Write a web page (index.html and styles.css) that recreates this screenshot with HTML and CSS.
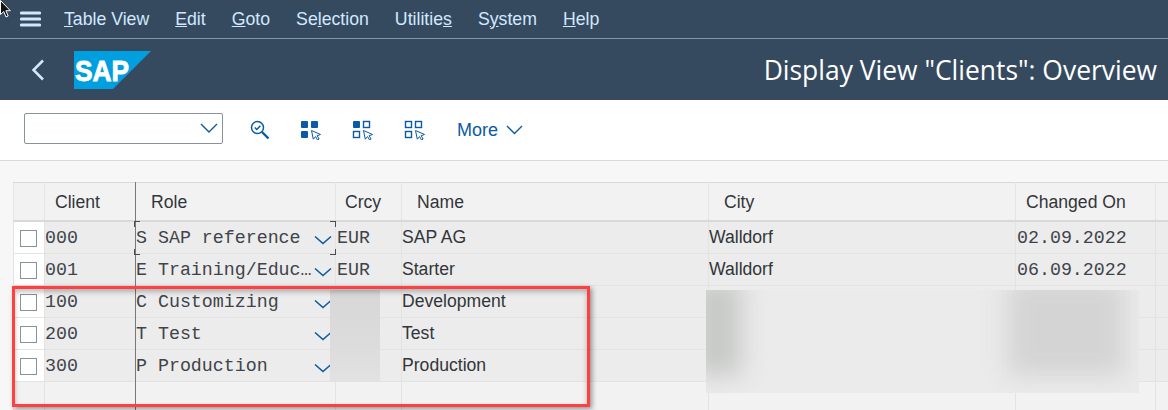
FILE: index.html
```html
<!DOCTYPE html>
<html lang="en">
<head>
  <meta charset="UTF-8" />
  <title>Display View "Clients": Overview</title>
  <link rel="stylesheet" href="styles.css">
</head>
<body>
  <svg class="mouse" width="11" height="19" viewBox="0 0 11 19">
    <path d="M0.5 0.5v14l3.2-3 2.3 5.5 2.2-1-2.3-5.3h4.4z" fill="#111" stroke="#fff"/>
  </svg>

  <header class="shell">
    <nav class="menu">
      <svg class="burger" width="21" height="16" viewBox="0 0 21 16"><path d="M1.5 2h18M1.5 8h18M1.5 14h18" stroke="#d1e8ff" stroke-width="3.2" stroke-linecap="round"/></svg>
      <a><u>T</u>able View</a>
      <a><u>E</u>dit</a>
      <a><u>G</u>oto</a>
      <a>Se<u>l</u>ection</a>
      <a>Utilitie<u>s</u></a>
      <a>S<u>y</u>stem</a>
      <a><u>H</u>elp</a>
    </nav>
    <div class="titlebar">
      <svg class="back" width="14" height="22" viewBox="0 0 14 22"><path d="M12 1.5 2.5 11l9.5 9.5" fill="none" stroke="#d1e8ff" stroke-width="2.5"/></svg>
      <svg class="logo" width="77" height="38" viewBox="0 0 77 38">
        <polygon points="0,0 77,0 39,38 0,38" fill="#009fdf"/>
        <text x="1" y="30" textLength="54" lengthAdjust="spacingAndGlyphs" class="logo-text">SAP</text>
      </svg>
      <h1>Display View "Clients": Overview</h1>
    </div>
  </header>

  <div class="toolbar">
    <div class="combo">
      <svg width="18" height="10" viewBox="0 0 18 10"><path d="M1 1l8 8 8-8" fill="none" stroke="#0a5aa5" stroke-width="1.4"/></svg>
    </div>
    <button class="tool tool-search">
      <svg width="20" height="20" viewBox="0 0 20 20">
        <circle cx="7.5" cy="7.5" r="6" fill="none" stroke="#0a5aa5" stroke-width="1.5"/>
        <path d="M12 12l6.5 6.5" stroke="#0a5aa5" stroke-width="2.4"/>
        <path d="M4.8 7.5l2 2 3.6-3.8" fill="none" stroke="#0a5aa5" stroke-width="1.5"/>
      </svg>
    </button>
    <button class="tool">
      <svg width="22" height="20" viewBox="0 0 22 20">
        <rect x="1" y="1" width="7" height="7" rx="1" fill="#0a5aa5"/>
        <rect x="11" y="1" width="7" height="7" rx="1" fill="#0a5aa5"/>
        <rect x="1" y="11" width="7" height="7" rx="1" fill="#0a5aa5"/>
        <path d="M11.5 10.5l9 4-3.4 1.2 2 3.3-1.6.9-2-3.3-2.2 2.6z" fill="#fff" stroke="#0a5aa5"/>
      </svg>
    </button>
    <button class="tool">
      <svg width="22" height="20" viewBox="0 0 22 20">
        <rect x="1" y="1" width="7" height="7" rx="1" fill="#0a5aa5"/>
        <rect x="11.5" y="1.5" width="6" height="6" fill="none" stroke="#0a5aa5" stroke-width="1.4"/>
        <rect x="1.5" y="11.5" width="6" height="6" fill="none" stroke="#0a5aa5" stroke-width="1.4"/>
        <path d="M11.5 10.5l9 4-3.4 1.2 2 3.3-1.6.9-2-3.3-2.2 2.6z" fill="#fff" stroke="#0a5aa5"/>
      </svg>
    </button>
    <button class="tool">
      <svg width="22" height="20" viewBox="0 0 22 20">
        <rect x="1.5" y="1.5" width="6" height="6" fill="none" stroke="#0a5aa5" stroke-width="1.4"/>
        <rect x="11.5" y="1.5" width="6" height="6" fill="none" stroke="#0a5aa5" stroke-width="1.4"/>
        <rect x="1.5" y="11.5" width="6" height="6" fill="none" stroke="#0a5aa5" stroke-width="1.4"/>
        <path d="M11.5 10.5l9 4-3.4 1.2 2 3.3-1.6.9-2-3.3-2.2 2.6z" fill="#fff" stroke="#0a5aa5"/>
      </svg>
    </button>
    <button class="more">More
      <svg width="17" height="10" viewBox="0 0 17 10"><path d="M1 1l7.5 7.5L16 1" fill="none" stroke="#0a5aa5" stroke-width="1.4"/></svg>
    </button>
  </div>

  <main class="content">
    <table class="grid">
      <colgroup>
        <col class="c-check"><col class="c-client"><col class="c-role"><col class="c-crcy"><col class="c-name"><col class="c-city"><col class="c-date"><col class="c-rest">
      </colgroup>
      <thead>
        <tr>
          <th></th>
          <th class="h-client">Client</th>
          <th class="h-role">Role</th>
          <th class="h-crcy">Crcy</th>
          <th class="h-name">Name</th>
          <th class="h-city">City</th>
          <th class="h-date">Changed On</th>
          <th></th>
        </tr>
      </thead>
      <tbody>
        <tr>
          <td class="check"><span class="box"></span></td>
          <td class="mono flush">000</td>
          <td class="flush"><div class="role"><span class="mono">S SAP reference</span><svg width="18" height="10" viewBox="0 0 18 10"><path d="M1 1.5l8 7 8-7" fill="none" stroke="#0a5aa5" stroke-width="1.6"/></svg></div></td>
          <td class="mono">EUR</td>
          <td class="txt flush">SAP AG</td>
          <td class="txt flush">Walldorf</td>
          <td class="mono date">02.09.2022</td>
          <td></td>
        </tr>
        <tr>
          <td class="check"><span class="box"></span></td>
          <td class="mono flush">001</td>
          <td class="flush"><div class="role"><span class="mono">E Training/Educ…</span><svg width="18" height="10" viewBox="0 0 18 10"><path d="M1 1.5l8 7 8-7" fill="none" stroke="#0a5aa5" stroke-width="1.6"/></svg></div></td>
          <td class="mono">EUR</td>
          <td class="txt flush">Starter</td>
          <td class="txt flush">Walldorf</td>
          <td class="mono date">06.09.2022</td>
          <td></td>
        </tr>
        <tr>
          <td class="check"><span class="box"></span></td>
          <td class="mono flush">100</td>
          <td class="flush"><div class="role"><span class="mono">C Customizing</span><svg width="18" height="10" viewBox="0 0 18 10"><path d="M1 1.5l8 7 8-7" fill="none" stroke="#0a5aa5" stroke-width="1.6"/></svg></div></td>
          <td></td>
          <td class="txt flush">Development</td>
          <td></td>
          <td></td>
          <td></td>
        </tr>
        <tr>
          <td class="check"><span class="box"></span></td>
          <td class="mono flush">200</td>
          <td class="flush"><div class="role"><span class="mono">T Test</span><svg width="18" height="10" viewBox="0 0 18 10"><path d="M1 1.5l8 7 8-7" fill="none" stroke="#0a5aa5" stroke-width="1.6"/></svg></div></td>
          <td></td>
          <td class="txt flush">Test</td>
          <td></td>
          <td></td>
          <td></td>
        </tr>
        <tr>
          <td class="check"><span class="box"></span></td>
          <td class="mono flush">300</td>
          <td class="flush"><div class="role"><span class="mono">P Production</span><svg width="18" height="10" viewBox="0 0 18 10"><path d="M1 1.5l8 7 8-7" fill="none" stroke="#0a5aa5" stroke-width="1.6"/></svg></div></td>
          <td></td>
          <td class="txt flush">Production</td>
          <td></td>
          <td></td>
          <td></td>
        </tr>
        <tr class="empty">
          <td></td><td></td><td></td><td></td><td></td><td></td><td></td><td></td>
        </tr>
      </tbody>
    </table>

    <div class="col-marker"></div>
    <div class="focus"></div>
    <div class="blur blur-crcy"></div>
    <div class="blur blur-wide"><span class="smear smear-l"></span><span class="smear smear-r"></span></div>
    <div class="highlight"></div>
  </main>
</body>
</html>
```

FILE: styles.css
```css
html, body {
  margin: 0;
  padding: 0;
  height: 410px;
  overflow: hidden;
}
body {
  position: relative;
  background: #f7f7f7;
  font-family: "Liberation Sans", Arial, sans-serif;
  color: #32363a;
}
.mouse {
  position: absolute;
  top: 0;
  left: 0;
  z-index: 5;
}

/* shell header */
.shell {
  background: #354a5f;
  height: 100px;
}
.menu {
  display: flex;
  align-items: center;
  height: 38px;
  border-bottom: 1px solid #7996b4;
  color: #d1e8ff;
  font-size: 17.7px;
  gap: 26px;
  padding-left: 20px;
}
.menu .burger {
  margin-right: -3px;
}
.titlebar {
  display: flex;
  align-items: center;
  height: 61px;
  padding: 0 11px 0 31px;
}
.back {
  margin-right: 29px;
}
.logo-text {
  fill: #fff;
  stroke: #fff;
  stroke-width: 0.9px;
  font-family: "Liberation Sans", Arial, sans-serif;
  font-weight: 700;
  font-size: 30px;
}
.titlebar h1 {
  margin: 0 0 0 auto;
  font-family: "Open Sans", sans-serif;
  font-weight: 400;
  font-size: 26.45px;
  color: #fff;
}

/* toolbar */
.toolbar {
  display: flex;
  align-items: center;
  height: 60px;
  background: #fff;
  border-bottom: 1px solid #d9d9d9;
  padding-left: 24px;
}
.combo {
  display: flex;
  align-items: center;
  justify-content: flex-end;
  box-sizing: border-box;
  width: 199px;
  height: 31px;
  border: 1px solid #89919a;
  border-radius: 2px;
  padding-right: 4px;
  margin: 0 27px 4px 0;
}
.tool {
  display: flex;
  width: 22px;
  padding: 0;
  margin-right: 30px;
  border: none;
  background: none;
}
.tool-search {
  margin-right: 28px;
}
.more {
  display: flex;
  align-items: center;
  gap: 8px;
  margin-left: 1px;
  padding: 0;
  border: none;
  background: none;
  font-family: "Liberation Sans", Arial, sans-serif;
  font-size: 18px;
  color: #0a5aa5;
}

/* table */
.content {
  position: relative;
  padding: 21px 0 0 13px;
}
.grid {
  table-layout: fixed;
  border-collapse: collapse;
  width: 1155px;
  font-size: 17.6px;
}
.c-check { width: 31px; }
.c-client { width: 91px; }
.c-role { width: 200px; }
.c-crcy { width: 66px; }
.c-name { width: 307px; }
.c-city { width: 307px; }
.c-date { width: 140px; }
.c-rest { width: 13px; }
.grid th {
  height: 36px;
  padding: 1px 0 0;
  background: #f2f2f2;
  border: 1px solid #e5e5e5;
  border-top-color: #d9d9d9;
  border-bottom: 2px solid #d9d9d9;
  font-weight: 400;
  text-align: left;
  white-space: nowrap;
}
.grid .h-client, .grid .h-date { padding-left: 10px; }
.grid .h-crcy { padding-left: 9px; }
.grid .h-role, .grid .h-city, .grid .h-name { padding-left: 15px; }
.grid td {
  height: 31px;
  padding: 0 0 0 1px;
  background: #ececec;
  border: 1px solid #e3e3e3;
  white-space: nowrap;
  overflow: hidden;
}
.grid td.flush {
  padding-left: 0;
}
.grid td.check {
  background: #fff;
  padding: 0 0 0 6px;
}
.grid .empty td {
  background: #f2f2f2;
}
.box {
  display: block;
  box-sizing: border-box;
  width: 17px;
  height: 17px;
  margin-top: 2px;
  background: #fff;
  border: 1px solid #89919a;
}
.mono {
  font-family: "Liberation Mono", "DejaVu Sans Mono", monospace;
  font-size: 18.3px;
  color: #40444a;
}
.role {
  display: flex;
  align-items: center;
  justify-content: space-between;
  padding-right: 3px;
}
.role svg {
  flex: none;
  margin-top: 5px;
}

/* things lying over the table */
.col-marker {
  position: absolute;
  top: 21px;
  left: 135px;
  width: 1px;
  height: 230px;
  background: #77797c;
}
.focus {
  position: absolute;
  top: 60px;
  left: 134px;
  width: 202px;
  height: 34px;
  --c: #4a4d52;
  background:
    linear-gradient(var(--c), var(--c)) 0 0 / 6px 1px,
    linear-gradient(var(--c), var(--c)) 0 0 / 1px 6px,
    linear-gradient(var(--c), var(--c)) 100% 0 / 6px 1px,
    linear-gradient(var(--c), var(--c)) 100% 0 / 1px 6px,
    linear-gradient(var(--c), var(--c)) 0 100% / 6px 1px,
    linear-gradient(var(--c), var(--c)) 0 100% / 1px 6px,
    linear-gradient(var(--c), var(--c)) 100% 100% / 6px 1px,
    linear-gradient(var(--c), var(--c)) 100% 100% / 1px 6px;
  background-repeat: no-repeat;
}
.blur {
  position: absolute;
  overflow: hidden;
  background: #ebebeb;
}
.blur-crcy {
  top: 129px;
  left: 330px;
  width: 50px;
  height: 92px;
  background: linear-gradient(#d6d7d6, #dcdcdc 60%, #e2e2e2);
}
.blur-wide {
  top: 129px;
  left: 706px;
  width: 433px;
  height: 103px;
}
.smear {
  position: absolute;
  top: -10px;
  height: 96px;
  background: #c8cac8;
  filter: blur(12px);
}
.smear-l {
  left: -14px;
  width: 50px;
}
.smear-r {
  right: 14px;
  width: 118px;
  background: #d3d4d3;
}
.highlight {
  position: absolute;
  top: 125px;
  left: 12px;
  box-sizing: border-box;
  width: 578px;
  height: 121px;
  border: 3px solid #ff4040;
  box-shadow: 2px 2px 5px rgba(0, 0, 0, 0.4), inset 0 3px 5px rgba(0, 0, 0, 0.25);
}
```
